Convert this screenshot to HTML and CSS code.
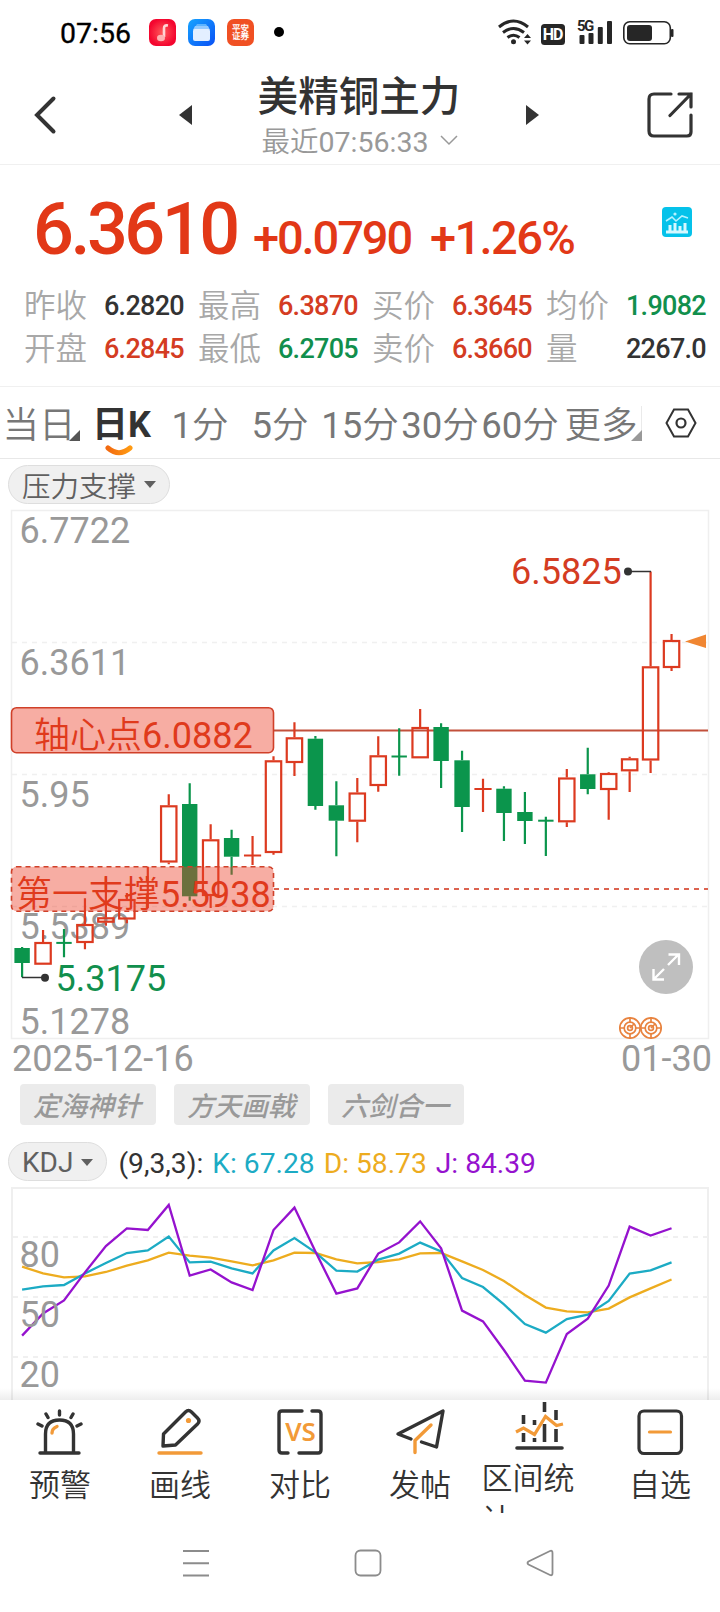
FILE: index.html
```html
<!DOCTYPE html>
<html lang="zh-CN">
<head>
    <meta charset="UTF-8">
    <meta name="viewport" content="width=device-width, initial-scale=1.0">
    <title>美精铜主力</title>
    <link rel="stylesheet" href="styles.css">
</head>
<body>
    <div class="status-bar">
        <span class="time">07:56</span>
        <svg class="app-icon" width="27" height="27" viewBox="0 0 27 27">
            <defs>
                <radialGradient id="music"><stop offset="0" stop-color="#ff5a5a"/><stop offset="1" stop-color="#f4062f"/></radialGradient>
                <linearGradient id="files" x2="1" y2="1"><stop offset="0" stop-color="#16a4ff"/><stop offset="1" stop-color="#0a50f5"/></linearGradient>
            </defs>
            <rect width="27" height="27" rx="7" fill="url(#music)"/>
            <path d="M19 6.500c-3-.5-4 .5-4 3V18" fill="none" stroke="#ffd5d5" stroke-width="2.600"/>
            <ellipse cx="12" cy="19" rx="4" ry="3.200" fill="#ffb3b3"/>
        </svg>
        <svg class="app-icon" width="27" height="27" viewBox="0 0 27 27">
            <rect width="27" height="27" rx="7" fill="url(#files)"/>
            <path d="M9 5h9l2 3H7z" fill="#5cb4ff"/>
            <path d="M7 7h13l2 4H5z" fill="#93caff"/>
            <rect x="5" y="10" width="17" height="12" rx="2" fill="#e3efff"/>
        </svg>
        <div class="app-icon broker"><span>平安</span><span>证券</span></div>
        <span class="dot"></span>
        <svg class="signals" width="180" height="30" viewBox="496 16 180 30">
            <g fill="none" stroke="#262626" stroke-width="3">
                <path d="M500 26q14.500-12 29 0"/>
                <path d="M504 31.500q10.500-8 21 0"/>
                <path d="M508.500 36.500q6-4.500 12 0"/>
            </g>
            <circle cx="514.500" cy="40.800" r="2.500" fill="#262626"/>
            <path d="M525 37l3.500-4 3.500 4zM525 39.500l3.500 4 3.500-4z" fill="#262626"/>
            <rect x="542" y="23" width="24" height="21" rx="3.500" fill="#262626"/>
            <text class="sig-hd" x="553.500" y="39.300">HD</text>
            <text class="sig-5g" x="578" y="30">5G</text>
            <g fill="#262626">
                <rect x="580.500" y="34" width="5" height="9" rx="1"/>
                <rect x="589.500" y="32" width="5" height="11" rx="1"/>
                <rect x="598.800" y="26" width="5" height="17" rx="1"/>
                <rect x="608" y="20" width="5" height="23" rx="1"/>
                <rect x="628" y="24" width="25" height="16" rx="3"/>
                <rect x="672" y="28" width="2.500" height="8" rx="1"/>
            </g>
            <rect x="624.800" y="20.800" width="46.500" height="22" rx="6" fill="none" stroke="#262626" stroke-width="1.600"/>
        </svg>
    </div>

    <div class="header">
        <svg class="back" width="24" height="40" viewBox="0 0 24 40"><path d="M20.500 3.500L4 20l16.500 16.500" fill="none" stroke="#333" stroke-width="4" stroke-linecap="round"/></svg>
        <svg class="prev" width="13" height="20" viewBox="0 0 13 20"><path d="M13 0v20L0 10z" fill="#333"/></svg>
        <div class="title">
            <h1>美精铜主力</h1>
            <p>最近07:56:33 <svg width="18" height="11" viewBox="0 0 18 11"><path d="M1 1l8 8 8-8" fill="none" stroke="#999" stroke-width="1.500"/></svg></p>
        </div>
        <svg class="next" width="13" height="20" viewBox="0 0 13 20"><path d="M0 0v20l13-10z" fill="#333"/></svg>
        <svg class="share" width="46" height="46" viewBox="0 0 46 46">
            <path d="M24 2H7Q2 2 2 7v32q0 5 5 5h33q4 0 4-4V23M32 2h12v13M44 2L23 23.500" fill="none" stroke="#333" stroke-width="3.200" stroke-linecap="round"/>
        </svg>
    </div>

    <div class="quote">
        <div class="price-line">
            <span class="last">6.3610</span>
            <span class="change">+0.0790</span>
            <span class="percent">+1.26%</span>
            <svg class="stat-icon" width="30" height="30" viewBox="0 0 30 30">
                <rect width="30" height="30" rx="4" fill="#05c2ea"/>
                <path d="M4 25h22M8 24v-6M13 24v-8M18 24v-5M23 24v-8" stroke="#d5f8ff" stroke-width="3" fill="none"/>
                <path d="M4 14l6-4 4 4 6-5 6 2" stroke="#b5f2ff" stroke-width="1.600" fill="none"/>
                <circle cx="13" cy="7" r="1.600" fill="#b5f2ff"/>
            </svg>
        </div>
        <div class="quote-grid">
            <div class="item"><span>昨收</span><b>6.2820</b></div>
            <div class="item"><span>最高</span><b class="up">6.3870</b></div>
            <div class="item"><span>买价</span><b class="up">6.3645</b></div>
            <div class="item"><span>均价</span><b class="down">1.9082</b></div>
            <div class="item"><span>开盘</span><b class="up">6.2845</b></div>
            <div class="item"><span>最低</span><b class="down">6.2705</b></div>
            <div class="item"><span>卖价</span><b class="up">6.3660</b></div>
            <div class="item"><span>量</span><b>2267.0</b></div>
        </div>
    </div>

    <div class="tabs">
        <div class="tab corner">当日</div>
        <div class="tab active">日K
            <svg class="smile" width="28" height="12" viewBox="0 0 28 12">
                <defs><linearGradient id="smile"><stop offset="0" stop-color="#f26a10"/><stop offset="1" stop-color="#ff9a12"/></linearGradient></defs>
                <path d="M3 3q11 9.500 22 0" fill="none" stroke="url(#smile)" stroke-width="5" stroke-linecap="round"/>
            </svg>
        </div>
        <div class="tab">1分</div>
        <div class="tab">5分</div>
        <div class="tab">15分</div>
        <div class="tab">30分</div>
        <div class="tab">60分</div>
        <div class="tab corner more">更多</div>
        <div class="settings">
            <svg width="32" height="30" viewBox="0 0 32 30"><path d="M9 1.500h14L30.500 15 23 28.500H9L1.500 15z" fill="none" stroke="#333" stroke-width="2"/><circle cx="16" cy="15" r="4.500" fill="none" stroke="#333" stroke-width="2.200"/></svg>
        </div>
    </div>

    <div class="indicator-row main-indicator">
        <div class="pill">压力支撑<i class="caret"></i></div>
    </div>

    <svg class="chart" width="720" height="531" viewBox="0 509 720 531">
        <rect x="11.500" y="510.500" width="697" height="528" class="frame"/>
        <path d="M12 642.500H708M12 774.500H708M12 906.500H708" class="grid"/>
        <g class="axis">
            <text x="19.500" y="543">6.7722</text>
            <text x="19.500" y="675">6.3611</text>
            <text x="19.500" y="807">5.95</text>
            <text x="19.500" y="939">5.5389</text>
            <text x="19.500" y="1034">5.1278</text>
        </g>
        <path d="M273 730.500H708" stroke="#c2503b" stroke-width="2"/>
        <path d="M274 889H708" stroke="#dc6350" stroke-width="2" stroke-dasharray="5 5"/>
        <g id="candles"></g>

        <rect x="11.500" y="707.700" width="262" height="45" rx="5" class="level"/>
        <text x="34" y="748" class="level-text">轴心点6.0882</text>
        <rect x="11.500" y="866.700" width="262" height="44.500" rx="5" class="level dashed"/>
        <text x="16" y="907" class="level-text">第一支撑5.5938</text>

        <path d="M628 571.500h23M22 977.500h23" stroke="#333" stroke-width="1.600"/>
        <circle cx="628" cy="571.500" r="4" fill="#333"/>
        <circle cx="45" cy="977.800" r="4" fill="#333"/>
        <text x="511" y="584" class="peak">6.5825</text>
        <text x="55.500" y="991" class="trough">5.3175</text>
        <path d="M685 641.500l21-7v13.500z" fill="#f08632"/>

        <circle cx="666" cy="967" r="27" fill="#bfbfbf"/>
        <path d="M668 965l11-11M668.500 954.500H679V965M664 969l-11 11M653.500 969v10.500H664" fill="none" stroke="#fff" stroke-width="2.400"/>
        <g fill="none" stroke="#e8833f" stroke-width="1.700">
            <circle cx="630" cy="1028" r="10.200"/><circle cx="630" cy="1028" r="5.800"/><circle cx="630" cy="1028" r="2.400"/>
            <path d="M630 1017v6M630 1033v6M619 1028h6M635 1028h6M630 1028l4-4"/>
            <circle cx="651" cy="1028" r="10.200"/><circle cx="651" cy="1028" r="5.800"/><circle cx="651" cy="1028" r="2.400"/>
            <path d="M651 1017v6M651 1033v6M640 1028h6M656 1028h6M651 1028l4-4"/>
        </g>
    </svg>

    <div class="dates"><span>2025-12-16</span><span>01-30</span></div>

    <div class="chips">
        <span>定海神针</span>
        <span>方天画戟</span>
        <span>六剑合一</span>
    </div>

    <div class="indicator-row kdj-row">
        <div class="pill">KDJ<i class="caret"></i></div>
        <span class="params">(9,3,3):</span>
        <span class="k">K: 67.28</span>
        <span class="d">D: 58.73</span>
        <span class="j">J: 84.39</span>
    </div>

    <div class="kdj-wrap">
        <svg class="chart" width="720" height="213" viewBox="0 1187 720 213">
            <path d="M12 1401V1188H708V1401" class="frame thick"/>
            <path d="M13 1237H708M13 1297H708M13 1357H708" class="grid thick"/>
            <g id="kdj-lines"></g>
            <g class="axis">
                <text x="19.500" y="1267">80</text>
                <text x="19.500" y="1327">50</text>
                <text x="19.500" y="1387">20</text>
            </g>
        </svg>
    </div>

    <div class="toolbar">
        <div class="tool">
            <svg width="48" height="48" viewBox="36 1408 48 48">
                <g fill="none" stroke="#333" stroke-width="3.400" stroke-linecap="round">
                    <path d="M40 1453h39M45.500 1453v-19q0-14 14-14t14 14v19M59.500 1411v4M46 1414l2 3.500M73 1414l-2 3.500M38 1424l4 2M81 1424l-4 2"/>
                    <path d="M52 1433q0-4.500 5-6.500" stroke="#f29a38"/>
                </g>
            </svg>
            <span>预警</span>
        </div>
        <div class="tool">
            <svg width="48" height="48" viewBox="156 1408 48 48">
                <g fill="none" stroke="#333" stroke-width="3.400" stroke-linecap="round" stroke-linejoin="round">
                    <path d="M163.500 1434l22-22q3-3 6 0l6 6q3 3 0 6l-22 21-12.500 1z"/>
                    <path d="M159 1453h42" stroke="#f29a38"/>
                </g>
                <circle cx="188.500" cy="1420.500" r="2.600" fill="#f29a38"/>
            </svg>
            <span>画线</span>
        </div>
        <div class="tool">
            <svg width="48" height="48" viewBox="276 1408 48 48">
                <path d="M302 1411h-20q-3 0-3 3v36q0 3 3 3h6M312 1411h6q3 0 3 3v36q0 3-3 3h-19" fill="none" stroke="#333" stroke-width="3.400" stroke-linecap="round"/>
                <text x="300.500" y="1441" class="vs">VS</text>
            </svg>
            <span>对比</span>
        </div>
        <div class="tool">
            <svg width="50" height="48" viewBox="395 1408 50 48">
                <g fill="none" stroke="#333" stroke-width="3.400" stroke-linecap="round" stroke-linejoin="round">
                    <path d="M411 1439l-13-5 45-23-6.500 36-15-5"/>
                    <path d="M431 1425l-16 15.500v12" stroke="#f29a38"/>
                </g>
            </svg>
            <span>发帖</span>
        </div>
        <div class="tool stats">
            <svg width="50" height="50" viewBox="516 1401 50 50">
                <path d="M524.500 1415v9M524.500 1433v9M535.500 1420v5M535.500 1438v4M545.500 1402v10M545.500 1424v18M557 1410v10M557 1429v13" stroke="#333" stroke-width="3.600"/>
                <path d="M518 1448h45" stroke="#333" stroke-width="3.600" stroke-linecap="round"/>
                <path d="M517 1432l7.500-4 11 6.500 11-18 11 9 6.500-1.500" fill="none" stroke="#f29a38" stroke-width="3.200"/>
            </svg>
            <span>区间统计</span>
        </div>
        <div class="tool">
            <svg width="48" height="48" viewBox="636 1408 48 48">
                <rect x="639" y="1411" width="42.500" height="42.500" rx="5" fill="none" stroke="#333" stroke-width="3.200"/>
                <path d="M649.500 1432h21" stroke="#f29a38" stroke-width="3.200" stroke-linecap="round"/>
            </svg>
            <span>自选</span>
        </div>
    </div>

    <div class="nav-bar">
        <svg width="28" height="28" viewBox="0 0 28 28"><path d="M1 2h26M1 14.300h26M1 26.500h26" stroke="#8c8c8c" stroke-width="2"/></svg>
        <svg width="28" height="28" viewBox="0 0 28 28"><rect x="1.500" y="1.500" width="25" height="25" rx="5" fill="none" stroke="#8c8c8c" stroke-width="1.800"/></svg>
        <svg width="28" height="28" viewBox="0 0 28 28"><path d="M24 2Q26.500 1 26.500 4v20q0 3-2.500 2L2.500 15.500q-2-1.500 0-3z" fill="none" stroke="#8c8c8c" stroke-width="1.800"/></svg>
    </div>

    <script src="chart.js"></script>
</body>
</html>
```

FILE: styles.css
```css
* {
    box-sizing: border-box;
}
body {
    margin: 0;
    width: 720px;
    height: 1612px;
    overflow: hidden;
    background: #fff;
    color: #333;
    font-family: Roboto, "Noto Sans CJK SC DemiLight", "Noto Sans CJK SC", sans-serif;
}
svg {
    display: block;
    flex: none;
}

/* status bar */
.status-bar {
    display: flex;
    align-items: center;
    height: 64px;
    padding-left: 60px;
}
.time {
    width: 89px;
    font-size: 28.5px;
    color: #000;
    padding-top: 2px;
    -webkit-text-stroke: 0.3px #000;
}
.app-icon {
    margin-right: 12px;
}
.broker {
    width: 27px;
    height: 27px;
    border-radius: 7px;
    background: #f05023;
    color: #fff;
    display: flex;
    flex-direction: column;
    align-items: center;
    justify-content: center;
    font-size: 8.5px;
    font-weight: bold;
    line-height: 8.5px;
}
.dot {
    width: 10px;
    height: 10px;
    margin-left: 8px;
    border-radius: 50%;
    background: #000;
}
.signals {
    margin-left: auto;
    margin-right: 45px;
}
.sig-hd {
    font-size: 16px;
    font-weight: bold;
    fill: #fff;
    text-anchor: middle;
    letter-spacing: -1px;
}
.sig-5g {
    font-size: 15px;
    font-weight: bold;
    fill: #262626;
    letter-spacing: -1.5px;
}

/* header */
.header {
    display: flex;
    align-items: center;
    height: 101px;
    padding: 2px 27px 0 33px;
    border-bottom: 1px solid #f0f0f0;
}
.prev {
    margin-left: 122px;
}
.title {
    flex: 1;
    text-align: center;
}
.title h1 {
    margin: 0;
    font-family: "Noto Sans CJK SC", sans-serif;
    font-size: 40.6px;
    line-height: 46px;
    font-weight: 500;
}
.title p {
    margin: 0;
    padding-top: 9px;
    display: flex;
    align-items: center;
    justify-content: center;
    gap: 12px;
    font-size: 28.5px;
    line-height: 34px;
    color: #999;
    position: relative;
    left: 1px;
}
.title p svg {
    margin-top: -4px;
}
.next {
    margin-right: 108px;
}

/* quote */
.quote {
    height: 222px;
    border-bottom: 1px solid #f0f0f0;
}
.price-line {
    display: flex;
    align-items: baseline;
    height: 112px;
    padding: 23px 28px 0 33px;
    color: #e23817;
    font-weight: 500;
}
.last {
    width: 220px;
    font-size: 72px;
    line-height: 84px;
    letter-spacing: -3.5px;
}
.change {
    width: 177px;
    font-size: 47px;
    letter-spacing: -2.1px;
}
.percent {
    font-size: 47px;
    letter-spacing: -1.6px;
}
.stat-icon {
    margin-left: auto;
    align-self: flex-start;
    margin-top: 19px;
}
.quote-grid {
    display: grid;
    grid-template-columns: repeat(4, 160px);
    grid-auto-rows: 43px;
    column-gap: 14px;
    padding: 8px 0 0 24px;
}
.item {
    display: flex;
    align-items: center;
    justify-content: space-between;
    line-height: 43px;
}
.item span {
    font-size: 31.5px;
    color: #a8a8a8;
}
.item b {
    font-size: 27px;
    font-weight: 500;
    letter-spacing: -0.7px;
}
.item .up {
    color: #d43c22;
}
.item .down {
    color: #118f4d;
}

/* period tabs */
.tabs {
    display: flex;
    height: 72px;
    border-bottom: 1px solid #e8e8e8;
}
.tab {
    position: relative;
    width: 80px;
    flex: none;
    text-align: center;
    font-size: 36.5px;
    line-height: 77px;
    color: #777;
    white-space: nowrap;
}
.tab:first-child {
    padding-right: 2px;
}
.tab.active {
    color: #333;
    font-family: Roboto, "Noto Sans CJK SC", sans-serif;
    font-size: 36px;
    font-weight: bold;
    padding-left: 3px;
}
.smile {
    position: absolute;
    left: 25px;
    bottom: 1px;
}
.corner::after {
    content: "";
    position: absolute;
    right: 0;
    bottom: 17px;
    border-left: 11px solid transparent;
    border-bottom: 11px solid #555;
}
.more {
    width: 82px;
}
.more::after {
    border-bottom-color: #999;
}
.settings {
    flex: 1;
    display: flex;
    align-items: center;
    justify-content: center;
}
.settings::before {
    content: "";
    width: 1px;
    height: 34px;
    margin-right: 23px;
    margin-left: -24px;
    background: #eaeaea;
}

/* indicators */
.indicator-row {
    display: flex;
    align-items: center;
    padding-left: 8px;
    font-size: 28.2px;
}
.main-indicator {
    height: 50px;
    padding-top: 1px;
}
.pill {
    display: flex;
    align-items: center;
    height: 39px;
    padding: 0 13px 0 13px;
    border: 1px solid #dedede;
    border-radius: 20px;
    background: #f0f0f0;
    color: #606060;
    font-size: 28.5px;
}
.caret {
    margin-left: 8px;
    border: 6px solid transparent;
    border-top: 7px solid #606060;
    border-bottom: 0;
}

/* charts */
.frame {
    fill: none;
    stroke: #efefef;
    stroke-width: 1.5;
}
.grid {
    stroke: #f0f0f0;
    stroke-width: 1.3;
    stroke-dasharray: 5 5;
}
.thick {
    stroke-width: 2;
}
.axis {
    font-size: 36px;
    fill: #999;
}
.level {
    fill: rgba(236, 66, 41, 0.43);
    stroke: #d04029;
    stroke-width: 1.6;
}
.dashed {
    stroke-dasharray: 5 4;
}
.level-text {
    font-size: 36px;
    fill: #e03a1c;
}
.peak {
    font-size: 36px;
    fill: #d43c22;
}
.trough {
    font-size: 36px;
    fill: #118f4d;
}
.dates {
    display: flex;
    justify-content: space-between;
    padding: 1px 8px 0 12px;
    height: 44px;
    font-size: 36px;
    line-height: 37px;
    color: #999;
}
.chips {
    display: flex;
    gap: 18px;
    padding-left: 20px;
}
.chips span {
    width: 136px;
    height: 41px;
    border-radius: 4px;
    background: #ebebeb;
    color: #999;
    font-family: "Noto Sans CJK SC", sans-serif;
    font-size: 27px;
    line-height: 41px;
    font-weight: 500;
    font-style: italic;
    text-align: center;
    padding-right: 2px;
}
.kdj-row {
    height: 62px;
    padding-top: 11px;
}
.kdj-row span {
    margin-right: 9px;
    padding-top: 3px;
    white-space: nowrap;
}
.kdj-row .pill {
    margin-right: 11px;
    padding-top: 1px;
    font-size: 28px;
}
.params {
    color: #333;
}
.k {
    color: #1cabc4;
}
.d {
    color: #edac1f;
}
.j {
    color: #9512ce;
}
.kdj-wrap {
    position: relative;
    height: 213px;
}
.kdj-wrap::after {
    content: "";
    position: absolute;
    left: 0;
    right: 0;
    bottom: 0;
    height: 12px;
    background: linear-gradient(rgba(0, 0, 0, 0), rgba(0, 0, 0, 0.07));
}

/* bottom toolbar */
.toolbar {
    display: flex;
    height: 113px;
    background: #fff;
    overflow: hidden;
}
.tool {
    width: 120px;
    height: 113px;
    overflow: hidden;
    padding-top: 8px;
    display: flex;
    flex-direction: column;
    align-items: center;
    font-size: 31px;
    line-height: 42px;
    color: #333;
}
.tool span {
    margin-top: 9px;
}
.stats {
    padding-top: 1px;
}
.stats span {
    width: 117px;
    margin-top: 7px;
}
.vs {
    font-family: "Noto Sans", sans-serif;
    font-size: 26px;
    font-weight: 600;
    fill: #f29a38;
    text-anchor: middle;
}

/* system navigation */
.nav-bar {
    display: flex;
    justify-content: center;
    gap: 144px;
    height: 99px;
    padding-top: 36px;
    padding-left: 16px;
}
```

FILE: chart.js
```js
const STEP = 20.95;
const RED = "#dc3a20";
const GREEN = "#0b954c";

// high, body top, body bottom, low (in chart units), 1 = up / 0 = down
const candles = [
    [947, 948, 963, 977.3, 0], [930, 942, 964.7, 964.7, 1], [929, 942.9, 942.9, 957.3, 0],
    [898.3, 924, 943, 949.3, 1], [877.3, 917.3, 922.7, 925.7, 1], [893, 899, 919.5, 923.3, 1],
    [866.7, 898, 898, 908, 1], [794.3, 805.3, 862.5, 864.3, 1], [783.3, 804, 896.3, 900.7, 0],
    [824.3, 839.3, 896, 908, 1], [829.7, 838, 856.7, 874.7, 0], [836, 855.5, 855.5, 865, 1],
    [756.3, 760.3, 853, 854.7, 1], [722.3, 737.3, 763, 776, 1], [736, 738.7, 806, 809.7, 0],
    [781.3, 805.3, 820.7, 856.3, 0], [778, 792.5, 821.7, 842.3, 1], [736.3, 755.3, 786, 791.7, 1],
    [728.3, 756.5, 756.5, 775.7, 0], [709, 727, 758.3, 758.3, 1], [723.3, 727, 761, 788, 0],
    [750.7, 760.3, 807, 832, 0], [778.7, 789, 789, 812, 1], [786.3, 788.7, 813, 841, 0],
    [792, 812, 821, 844, 0], [816.7, 820.7, 820.7, 856, 0], [769, 777.5, 822.3, 827, 1],
    [747.7, 774.3, 789, 794.3, 0], [772.3, 773, 790, 819.7, 1], [756.7, 758.3, 771.3, 792, 1],
    [571.5, 666.3, 760.5, 773, 1], [634, 640, 668, 671, 1]
];

const series = {
    "#edac1f": [65.2, 61.8, 59.8, 60.3, 62.5, 65.7, 68.3, 72.2, 70.7, 69.7, 67.8, 65.8, 68.3, 72.2, 72, 68.8, 66.8, 67.5, 68.8, 71.8, 72, 67.8, 63.5, 58, 51, 44.7, 42.8, 42.3, 44.2, 49.8, 54.3, 58.73],
    "#1cabc4": [53.7, 55.3, 56, 61.8, 67, 72, 73.3, 80.2, 67.3, 67.7, 64.3, 61.8, 73.3, 79.5, 72.3, 63.2, 62.7, 68.7, 71.7, 77.2, 72.8, 59.5, 55, 46.3, 36.5, 32.2, 39, 41.2, 48, 61.7, 63.3, 67.28],
    "#9512ce": [30.7, 41.8, 48.3, 62.3, 75.5, 84.3, 83.5, 96, 60.7, 63.8, 57.3, 53.5, 83.5, 94.7, 72.7, 51.7, 54.3, 71.7, 77.3, 87.8, 74.3, 43.2, 37.8, 23.5, 8.2, 7.2, 31.5, 39.2, 55.7, 85.2, 80.7, 84.39]
};

function drawCandles() {
    let html = "";
    candles.forEach(([high, top, bottom, low, up], i) => {
        const x = 22.1 + i * STEP;
        const color = up ? RED : GREEN;
        const half = up ? 8.6 : 7.7;
        html += `<path d="M${x} ${high}V${top}M${x} ${bottom}V${low}" stroke="${color}" stroke-width="2.2"/>`;
        if (top === bottom) {
            html += `<path d="M${x - half} ${top}H${x + half}" stroke="${color}" stroke-width="2"/>`;
        } else if (up) {
            html += `<rect x="${x - 7.7}" y="${top + 1}" width="15.4" height="${bottom - top - 2}" fill="none" stroke="${color}" stroke-width="2.2"/>`;
        } else {
            html += `<rect x="${x - half}" y="${top}" width="${half * 2}" height="${bottom - top}" fill="${color}"/>`;
        }
    });
    document.getElementById("candles").innerHTML = html;
}

function drawKdj() {
    let html = "";
    for (const color in series) {
        const points = series[color].map((v, i) => `${22.1 + i * STEP},${1357 - (v - 20) * 2}`);
        html += `<polyline points="${points.join(" ")}" fill="none" stroke="${color}" stroke-width="2.3"/>`;
    }
    document.getElementById("kdj-lines").innerHTML = html;
}

drawCandles();
drawKdj();
```
